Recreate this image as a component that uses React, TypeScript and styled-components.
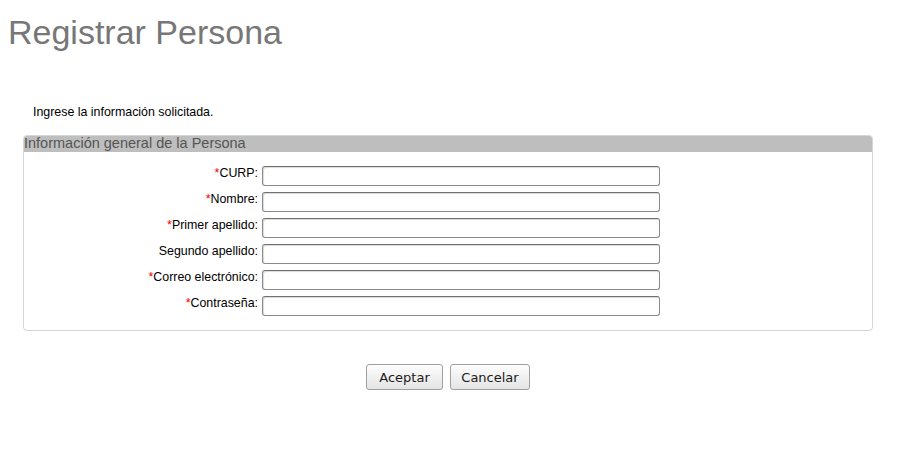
import React from "react";
import styled, { createGlobalStyle } from "styled-components";

const Global = createGlobalStyle`
  html, body { margin: 0; padding: 0; background: #fff; }
  body { font-family: "Liberation Sans", Arial, sans-serif; color: #000; }
`;

const Page = styled.div`
  padding: 0 8px;
`;

const Title = styled.h1`
  margin: 0;
  padding-top: 13px;
  font-size: 34px;
  line-height: 39px;
  font-weight: normal;
  color: #777;
`;

const Intro = styled.p`
  margin: 53px 0 0 25px;
  font-size: 12.4px;
  line-height: 14px;
`;

const Panel = styled.section`
  margin: 16px 0 0 15px;
  width: 850px;
  box-sizing: border-box;
  border: 1px solid #d2d6d6;
  border-radius: 4px;
  overflow: hidden;
`;

const PanelHeader = styled.div`
  height: 17px;
  line-height: 17px;
  background: #bebebe;
  color: #555;
  font-size: 14.5px;
  margin-top: -1px;
`;

const FormGrid = styled.div`
  display: grid;
  grid-template-columns: 234px 398px;
  column-gap: 4px;
  row-gap: 6px;
  padding: 14px 0 14px;
  align-items: start;
`;

const Label = styled.label`
  text-align: right;
  font-size: 12.4px;
  line-height: 14px;
  color: #000;
`;

const Req = styled.span`
  color: #e00;
`;

const Input = styled.input`
  box-sizing: border-box;
  width: 398px;
  height: 20px;
  border: 1px solid #8a8a8a;
  border-top-color: #6f6f6f;
  border-radius: 3px;
  box-shadow: inset 1px 1px 1px rgba(0, 0, 0, 0.15);
  background: #fff;
  padding: 0 3px;
  font: 12px "Liberation Sans", Arial, sans-serif;
  outline: none;
`;

const Actions = styled.div`
  margin: 33px 0 0 15px;
  width: 850px;
  display: flex;
  justify-content: center;
  gap: 7px;
`;

const Button = styled.button<{ $width: number }>`
  width: ${(p) => p.$width}px;
  height: 26px;
  padding: 0;
  font: 13px "DejaVu Sans", sans-serif;
  color: #1a1a1a;
  border: 1px solid #a0a0a0;
  border-radius: 3px;
  background: linear-gradient(#fdfdfd, #e4e4e4);
  box-shadow: 0 1px 0 rgba(0, 0, 0, 0.05);
`;

const fields: { label: string; required: boolean; type?: string }[] = [
  { label: "CURP", required: true },
  { label: "Nombre", required: true },
  { label: "Primer apellido", required: true },
  { label: "Segundo apellido", required: false },
  { label: "Correo electrónico", required: true },
  { label: "Contraseña", required: true, type: "password" },
];

export default function App() {
  return (
    <Page>
      <Global />
      <Title>Registrar Persona</Title>
      <Intro>Ingrese la información solicitada.</Intro>
      <Panel>
        <PanelHeader>Información general de la Persona</PanelHeader>
        <FormGrid>
          {fields.map((f) => (
            <React.Fragment key={f.label}>
              <Label>
                {f.required && <Req>*</Req>}
                {f.label}:
              </Label>
              <Input type={f.type ?? "text"} />
            </React.Fragment>
          ))}
        </FormGrid>
      </Panel>
      <Actions>
        <Button $width={77}>Aceptar</Button>
        <Button $width={80}>Cancelar</Button>
      </Actions>
    </Page>
  );
}
